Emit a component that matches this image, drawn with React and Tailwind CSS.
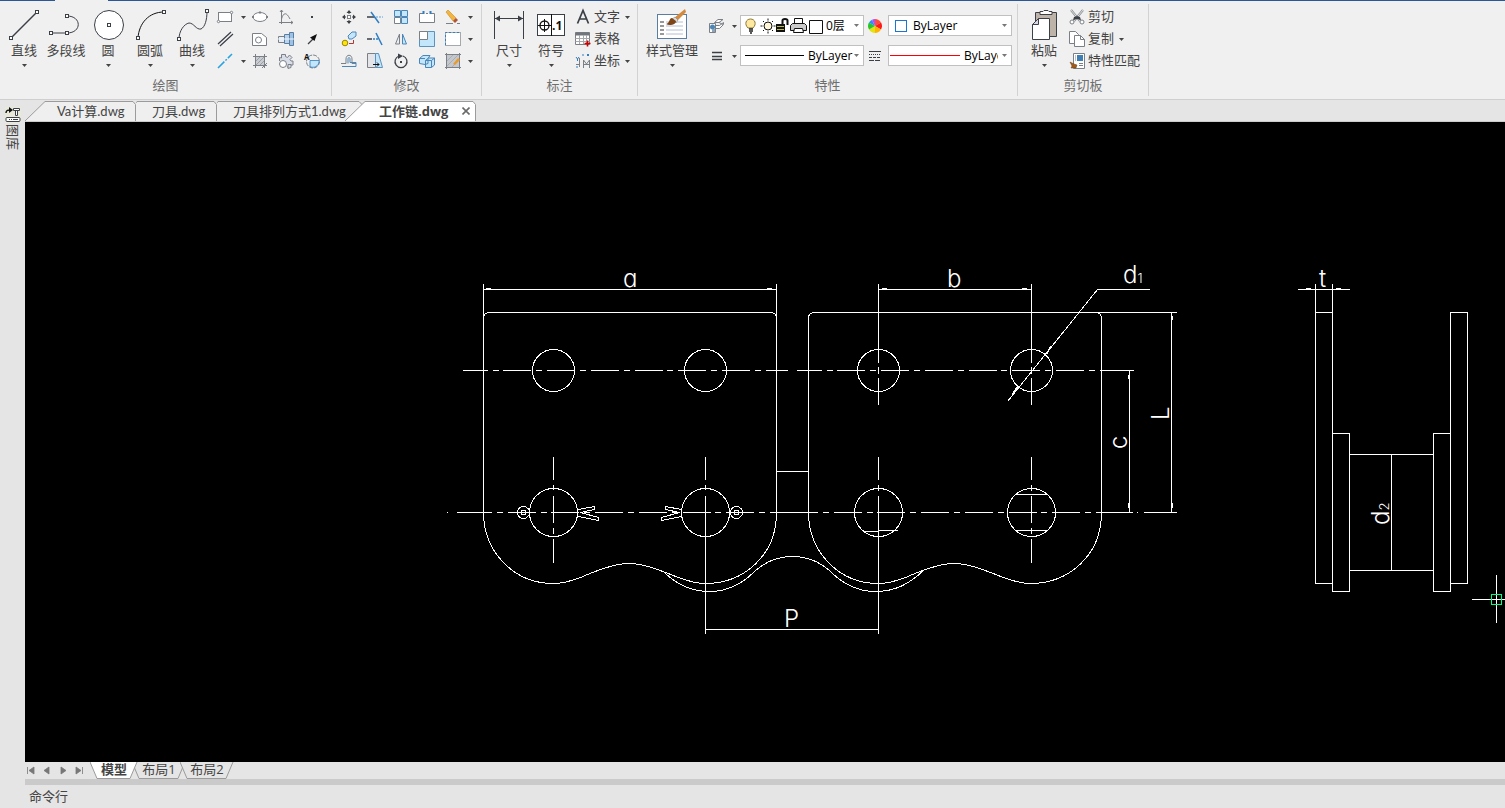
import { clsx } from 'clsx'

const ink = '#3b3f46'
const soft = '#7b8087'
const blue = '#2f7fc4'
const sky = '#c3e6fa'

function Caret({ className }) {
  return (
    <svg width="5" height="3" viewBox="0 0 5 3" className={clsx('shrink-0', className)}>
      <path d="M0 0h5L2.5 3z" fill="currentColor" />
    </svg>
  )
}

/* ---------- large icons, 34 x 34 ---------- */

const Dot = ({ x, y }) => (
  <rect x={x - 1.5} y={y - 1.5} width="3" height="3" fill="#fff" stroke={ink} />
)

const big = {
  line: (
    <>
      <path d="M4 30 30 4" stroke={ink} strokeWidth="1.5" />
      <Dot x={4} y={30} />
      <Dot x={30} y={4} />
    </>
  ),
  polyline: (
    <>
      <path d="M2 25h16c15 0 15-17 0-17" stroke={ink} fill="none" />
      <Dot x={2} y={25} />
      <Dot x={18} y={25} />
      <Dot x={18} y={8} />
    </>
  ),
  circle: (
    <>
      <circle cx="18" cy="17" r="14.500" fill="#fff" stroke={ink} />
      <Dot x={18} y={17} />
    </>
  ),
  arc: (
    <>
      <path d="M5 30C6 15 16 4 31 4" stroke="#111" fill="none" />
      <Dot x={5} y={30} />
      <Dot x={31} y={4} />
    </>
  ),
  curve: (
    <>
      <path d="M4 31c0-8 5-15 10-16 5 0 7 7 12 6 4-2 6-9 6-18" stroke={ink} fill="none" />
      <Dot x={4} y={31} />
      <Dot x={32} y={3} />
    </>
  ),
  dimension: (
    <>
      <path d="M2.500 3v28M31.500 3v28M3 10.500h28" stroke={ink} />
      <path d="M3 10.500l5-3v6zM31 10.500l-5-3v6z" fill={ink} />
    </>
  ),
  symbol: (
    <>
      <rect x="3.500" y="6.500" width="27" height="21" fill="#fff" stroke={ink} />
      <path d="M17.500 6v22M4 17.500h13M10.500 11v13" stroke="#111" />
      <circle cx="10.500" cy="17.500" r="4.500" fill="none" stroke="#111" strokeWidth="1.300" />
      <text x="18" y="22" className="text-[12px] font-bold" fill="#111">.1</text>
    </>
  ),
  style: (
    <>
      <rect x="2.500" y="6.500" width="29" height="24" fill="#fff" stroke="#5a7ea3" />
      <path d="M5 14h4M5 18h4M5 22h4M5 26h4" stroke="#333" />
      <path d="M11 14h17M11 18h17M11 22h17M11 26h17" stroke="#b5bed8" />
      <path d="m30 1-11 9 3 3 9-9z" fill="#d38a3c" />
      <path d="m20 9-3 2 4 4 2-3z" fill="#d9dde2" stroke="#777" strokeWidth=".5" />
      <path d="M17 10c-3 0-2 5-6 6 3 2 10 1 10-3z" fill="#7d4516" />
    </>
  ),
  paste: (
    <>
      <path d="M8.500 4.500h21v24h-21z" fill="#bdb3a8" stroke={ink} />
      <path d="M13 3.500h3l1-1h4l1 1h3v3H13z" fill="#fff" stroke={ink} />
      <path d="M11.500 10.500h11v21h-17v-15z" fill="#fff" stroke={ink} />
      <path d="M11.500 10.500v6h-6z" fill="#d6d8e4" stroke={ink} />
    </>
  ),
}

/* ---------- small icons, 16 x 16 ---------- */

const small = {
  rect: (
    <>
      <rect x=".5" y="3.500" width="13" height="9" fill="#fff" stroke={soft} />
      <circle cx="13.500" cy="3.500" r="1.200" fill="#fff" stroke={soft} />
      <circle cx=".5" cy="12.500" r="1.200" fill="#fff" stroke={soft} />
    </>
  ),
  ellipse: (
    <>
      <ellipse cx="8" cy="8" rx="7" ry="4.500" fill="#fff" stroke={soft} />
      <path d="M7 2.500h2v2H7zM0 7h2v2H0zM14 7h2v2h-2z" fill={soft} />
    </>
  ),
  graph: (
    <>
      <path d="M3.500 1v14M1 13.500h14M2 3l1.500-2L5 3M13 12l2 1.500-2 1.500" stroke={soft} fill="none" />
      <path d="M3.500 10c2-7 5-7 8.500 0" stroke={soft} fill="none" />
    </>
  ),
  point: <rect x="7" y="7" width="2" height="2" fill={ink} />,
  parallel: <path d="M0 13 13 1M2 15 15 3" stroke={ink} strokeWidth="1.200" />,
  contour: (
    <>
      <path d="M.5 2.500h9l5 4v8H.5z" fill="#fff" stroke={soft} />
      <circle cx="6.500" cy="9" r="3" fill="#fff" stroke={soft} />
    </>
  ),
  shaft: (
    <>
      <path d="M.5 5.500h6v6h-6z" fill="#e8eef5" stroke={soft} />
      <path d="M6.500 3.500h5v9h-5z" fill="#bcd3ea" stroke="#5a7ea3" />
      <path d="M11.500 1.500h4v13h-4z" fill="#9dc2e4" stroke="#5a7ea3" />
      <path d="M0 8h16" stroke="#eaf6ff" />
    </>
  ),
  arrow: (
    <>
      <path d="m4 13 5-5" stroke={ink} strokeWidth="1.300" />
      <path d="m13 3-2.500 7L6 6.500z" fill="#111" />
    </>
  ),
  axis: (
    <path d="M0 15 14 1" stroke="#2aa3e0" strokeWidth="1.500" strokeDasharray="9 1.500 2 1.500" />
  ),
  hatch: (
    <>
      <rect x="3" y="3" width="10" height="10" fill="#c9cdd1" />
      <path d="M3 9l6-6M3 13 13 3M7 13l6-6" stroke="#9ba0a6" />
      <path d="M1 3.500h14M1 12.500h14M3.500 1v14M12.500 1v14M10 15l5-5" stroke={soft} fill="none" />
    </>
  ),
  gear: (
    <>
      <path
        d="M1.500 8V4.500l2 .5V1.500h4v2l2 1 2-2.500 2.500 2.500-2 2 1 1.500h2v4h-2l-1 2h-3"
        fill="#d9dde8"
        stroke={soft}
      />
      <circle cx="5" cy="11" r="3.500" fill="#fff" stroke={soft} />
      <path d="M10 15.500v-4h3v3z" fill="#d9dde8" stroke={soft} />
    </>
  ),
  detail: (
    <>
      <circle cx="9" cy="8.500" r="6.500" fill="none" stroke={soft} strokeDasharray="4 1" />
      <path d="M6 7.500h9v1a6 6 0 0 1-9 5z" fill={sky} stroke={blue} strokeWidth=".8" />
      <text x="0" y="7" className="text-[8px] font-bold" fill="#111">A</text>
    </>
  ),
  move: (
    <>
      <path d="M8 2.500V5M8 11v2.500M2.500 8H5M11 8h2.500" stroke={ink} />
      <path d="m8 1 2.500 3h-5zM8 15l2.500-3h-5zM1 8l3-2.500v5zM15 8l-3-2.500v5z" fill={ink} />
      <rect x="6.500" y="6.500" width="3" height="3" fill="#fff" stroke={soft} />
    </>
  ),
  trim: (
    <>
      <path d="M0 8h8" stroke={ink} strokeWidth="1.500" />
      <path d="M9 8h7" stroke="#8cbbe2" strokeWidth="1.500" strokeDasharray="2 1" />
      <path d="m4 3 8 11" stroke={blue} strokeWidth="1.500" />
    </>
  ),
  array: (
    <>
      <path d="M1.500 1.500h6v6h-6zM8.500 1.500h6v6h-6zM8.500 8.500h6v6h-6z" fill={sky} stroke="#4a86b8" />
      <path d="M1.500 8.500h6v6h-6z" fill="#fff" stroke={soft} />
    </>
  ),
  breakAt: (
    <>
      <path d="M.5 4.500v9h15v-9" fill="#fff" stroke={soft} />
      <path d="M.5 4.500h4M7 4.500h2M11.500 4.500h4" stroke={soft} />
      <path d="M3.500 2h2v3h-2zM10.500 2h2v3h-2z" fill={blue} />
    </>
  ),
  erase: (
    <>
      <path d="m1 3 2-2 8 8-3 3z" fill="#f5b53c" stroke="#b87d1c" strokeWidth=".5" />
      <path d="m8 12 3-3 2 2-3 3z" fill="#b0543c" />
      <path d="M1 14.500h7M12 14.500h3" stroke={soft} />
    </>
  ),
  copyObj: (
    <>
      <path d="m7 5 4-4h4v4l-4 3H8z" fill={sky} stroke="#4a86b8" />
      <circle cx="4" cy="12" r="2.800" fill="#ffe500" stroke="#99860a" />
      <path d="M8 12.500h4.500V9" stroke="#b03838" fill="none" />
    </>
  ),
  extend: (
    <>
      <path d="M0 8h5" stroke={ink} strokeWidth="1.500" />
      <path d="M6 8h5" stroke={blue} strokeWidth="1.500" strokeDasharray="2 1" />
      <path d="m9 2 6 12" stroke={blue} strokeWidth="1.500" />
    </>
  ),
  mirror: (
    <>
      <path d="M6.500 3v10h-4z" fill="#eceef1" stroke={soft} />
      <path d="M9.500 3v10h4z" fill={sky} stroke="#4a86b8" />
    </>
  ),
  scale: (
    <>
      <path d="M.5 .5h15v15H.5z" fill={sky} stroke="#5b93bf" />
      <path d="M.5 .5h8v8h-8z" fill="#fff" stroke={soft} />
    </>
  ),
  select: (
    <>
      <rect x=".5" y="1.500" width="15" height="13" fill="#fff" stroke="#a5a9ae" />
      <path d="M.5 14V1.500H15" fill="none" stroke={blue} strokeDasharray="2 2" />
    </>
  ),
  offset: (
    <>
      <path d="M0 10.500h5V6c0-5 6-5 6 0v4.500h4" fill="none" stroke={soft} />
      <path d="M1 13.500h14V9.500H9V6c0-2-2-2-2 0v4.500" fill="none" stroke="#4a86b8" />
    </>
  ),
  stretch: (
    <>
      <path d="M.5 .5h8v14h-8z" fill="#e3e5e8" stroke={soft} />
      <path d="M8.500 .5h3l4 14h-7z" fill={sky} stroke="#5b93bf" />
      <path d="M6 11.500h6M10 9.500l2 2-2 2" fill="none" stroke="#111" />
    </>
  ),
  rotate: (
    <>
      <path d="M10 3A6 6 0 1 1 6 3" fill="none" stroke={ink} strokeWidth="1.300" />
      <path d="M5 .5 10 3 5 6z" fill={ink} />
      <rect x="7" y="8" width="2" height="2" fill={ink} />
    </>
  ),
  block: (
    <path
      d="M.5 5.500 4 2.500h7l-2 3v5l-3 1-5.500-1zM6.500 7.500l3-2.500h6v7l-3 2.500h-6zM6.500 7.500h6v7M12.500 7.500l3-2.500M.5 5.500H6"
      fill={sky}
      stroke="#4a86b8"
    />
  ),
  editHatch: (
    <>
      <rect x="2" y="2" width="12" height="12" fill="#c4c8cc" />
      <path d="M2 8l6-6M2 13 13 2M7 14l7-7" stroke="#a9aeb4" />
      <path d="M0 1.500h16M0 14.500h16M1.500 0v16M14.500 0v16" stroke={soft} />
      <path d="m8 11 5-6 2 2-5 5z" fill="#e89a2c" />
    </>
  ),
  text: (
    <path d="M2.500 14.500 8 1.500l5.500 13M4.500 10h7" fill="none" stroke={ink} strokeWidth="1.700" />
  ),
  table: (
    <>
      <path d="M.5 1.500h14v12H.5z" fill="#fff" stroke={soft} />
      <path d="M.5 1.500h14v3H.5z" fill="#70757c" />
      <path d="M.5 7.500h14M.5 10.500h14M4.500 4v9M8.500 4v9M11.500 4v9" stroke="#a5a9ae" />
      <path d="M12.500 9.500v6M9.500 12.500h6" stroke="#c00" strokeWidth="1.600" />
    </>
  ),
  coord: (
    <>
      <path d="M4.500 5v9M1 11.500h4M8.500 15V7l3 4 3-4v8M8 11.500h7" fill="none" stroke={soft} />
      <path d="m1 4 1.500 2L4 4M2.500 6v2M7 2h2M12 1l2 2M14 1l-2 2M1 14h2" fill="none" stroke={blue} />
    </>
  ),
  layers: (
    <>
      <path d="M5.500 4.500 9 1.500h5l-4 3zM5.500 7.500h5l4-3v2l-4 4h-5M10 4.500l4 2" fill="#fff" stroke={soft} />
      <path d="M.5 5.500h6v9h-6z" fill="#fff" stroke={soft} />
      <circle cx="3.500" cy="9" r="2.500" fill="#4a86b8" />
      <path d="M3 11h3v3H3z" fill="#8fa3b8" />
    </>
  ),
  lines: <path d="M3 4.500h10M3 8.500h10M3 11.500h10" stroke={ink} strokeWidth="1.300" />,
  lineType: (
    <>
      <path d="M2 3.500h12" stroke={ink} />
      <path d="M2 6.500h12" stroke={ink} strokeDasharray="1 1" />
      <path d="M2 9.500h12" stroke={ink} strokeDasharray="3 1" />
      <path d="M2 12.500h12" stroke={ink} strokeDasharray="5 1" />
    </>
  ),
  cut: (
    <>
      <path d="m2 1 9 11M14 1 5 12" stroke="#8b9096" strokeWidth="2.200" />
      <path d="m2 1 9 11M14 1 5 12" stroke="#fff" strokeWidth=".7" />
      <path d="m5 8 3-1 3 1 1 3-4-1-4 1z" fill={ink} />
      <circle cx="3" cy="13" r="2" fill="#fff" stroke={soft} />
      <circle cx="13" cy="13" r="2" fill="#fff" stroke={soft} />
    </>
  ),
  copy: (
    <>
      <path d="M.5 .5h6l3 3v9h-9z" fill="#fff" stroke={soft} />
      <path d="M5.500 4.500h6l4 4v7h-10z" fill="#fff" stroke={soft} />
      <path d="M11.500 4.500v4h4" fill="none" stroke={soft} />
    </>
  ),
  match: (
    <>
      <path d="M4.500 .5h11v15h-11z" fill="#fff" stroke={soft} />
      <path d="M8 2h6v6H8z" fill="#3f7db5" />
      <path d="M6 3h1M6 5h1M6 7h1M10 10.500h4M10 12.500h4" stroke={soft} />
      <path d="m1 9 4 2 3 1-1 3H2l1-2z" fill="#a05a1c" stroke="#6d3c10" strokeWidth=".5" />
    </>
  ),
}

function SmallIcon({ name }) {
  return (
    <svg width="16" height="16" viewBox="0 0 16 16" fill="none" className="shrink-0 overflow-visible">
      {small[name]}
    </svg>
  )
}

function BigButton({ icon, label, caret = true, wide }) {
  return (
    <button className={clsx('flex shrink-0 flex-col items-center pt-1', wide ? 'w-14' : 'w-[42px]')}>
      <svg width="34" height="34" viewBox="0 0 34 34" fill="none">
        {big[icon]}
      </svg>
      <span className="text-[13px] leading-4 whitespace-nowrap">{label}</span>
      {caret && <Caret className="mt-[6px]" />}
    </button>
  )
}

function IconButton({ icon, label }) {
  return (
    <button aria-label={label} className="flex h-[22px] w-[26px] items-center justify-center">
      <SmallIcon name={icon} />
    </button>
  )
}

function CaretButton({ label }) {
  return (
    <button aria-label={label} className="flex h-[22px] w-2 items-center justify-center">
      <Caret />
    </button>
  )
}

function TextButton({ icon, label, caret }) {
  return (
    <button className="flex h-[22px] items-center gap-[3px]">
      <SmallIcon name={icon} />
      <span className="pb-[2px] text-[13px] leading-4 whitespace-nowrap">{label}</span>
      {caret && <Caret className="ml-[2px]" />}
    </button>
  )
}

function Group({ label, children, className }) {
  return (
    <section aria-label={label} className="flex shrink-0 flex-col border-r border-[#d2d2d2]">
      <div className={clsx('flex h-[72px]', className)}>{children}</div>
      <h2 className="text-center text-[13px] leading-[18px] text-[#6e6e6e]">{label}</h2>
    </section>
  )
}

function Combo({ label, children, value, selectClass }) {
  return (
    <div className="relative flex h-[21px] w-[124px] items-center border border-[#c0c0c0] bg-white text-xs text-black">
      {children}
      <select
        aria-label={label}
        className={clsx('shrink-0 appearance-none overflow-hidden whitespace-nowrap outline-none', selectClass)}
      >
        <option>{value}</option>
      </select>
      <Caret className="pointer-events-none absolute right-1 text-[#777]" />
    </div>
  )
}

function ColorWheel() {
  return (
    <svg width="14" height="14" viewBox="-7 -7 14 14">
      <path d="M0 0V-7A7 7 0 0 1 6 -3.500z" fill="#ff4d3a" />
      <path d="M0 0 6-3.500A7 7 0 0 1 6 3.500z" fill="#ff1a1a" />
      <path d="M0 0 6 3.500A7 7 0 0 1 0 7z" fill="#ffb400" />
      <path d="M0 0V7A7 7 0 0 1-6 3.500z" fill="#e4e312" />
      <path d="M0 0-6 3.500A7 7 0 0 1-6-3.500z" fill="#28c628" />
      <path d="M0 0-6-3.500A7 7 0 0 1-3-6.300z" fill="#2c8cff" />
      <path d="M0 0-3-6.300A7 7 0 0 1 0-7z" fill="#b34dff" />
    </svg>
  )
}

function LayerIcons() {
  return (
    <svg width="79" height="17" viewBox="0 0 79 17" fill="none" className="ml-[3px] shrink-0">
      {/* bulb */}
      <path d="M4 11C0 7 2 2 6.500 2S13 7 9 11z" fill="#ffe9a0" stroke="#8a7a3a" />
      <path d="M5 12h4M5 14h4M6 16h2" stroke="#222" strokeWidth="1.500" />
      {/* sun */}
      <circle cx="24" cy="9" r="4" fill="#fff6d8" stroke="#111" />
      <path d="M24 1.500v2M24 14.500v2M16.500 9h2M29.500 9h2M19 4l1 1M28 13l1 1M29 4l-1 1M20 13l-1 1" stroke="#111" />
      {/* open padlock */}
      <path d="M32 7h9v8h-9z" fill="#111" />
      <path d="M33 9.500h7M33 12.500h7" stroke="#b9b93c" />
      <path d="M38.500 7V3.500c0-2 5-2 5 0V8" stroke="#111" strokeWidth="2" />
      {/* printer */}
      <path d="M50.500 7V1.500h8V7" fill="#fff" stroke="#111" />
      <path d="M48.500 6.500h12l2 2v5h-16v-5z" fill="#c9c9c9" stroke="#111" />
      <path d="M50.500 11.500h8l1 4h-10z" fill="#fff" stroke="#111" />
      {/* swatch */}
      <path d="M65.500 3.500h13v13h-13z" fill="#fff" stroke="#111" />
    </svg>
  )
}

function LineSample({ width, color, className }) {
  return (
    <svg width={width} height="3" shapeRendering="crispEdges" className={clsx('shrink-0', className)}>
      <rect y="1" width={width} height="1" fill={color} />
    </svg>
  )
}

function Ribbon() {
  return (
    <header className="h-[100px] shrink-0 border-b border-[#cfcfcf] bg-[#f0f0f0]">
      <div className="flex h-1 items-start">
        <div className="h-px w-[55px] bg-[#2b579a]" />
        <div className="h-px w-[53px]" />
        <div className="h-px flex-1 bg-[#2b579a]" />
      </div>
      <div className="flex h-[92px]">
        <Group label="绘图" className="w-[331px] pl-[3px]">
          <BigButton icon="line" label="直线" />
          <BigButton icon="polyline" label="多段线" caret={false} />
          <BigButton icon="circle" label="圆" />
          <BigButton icon="arc" label="圆弧" />
          <BigButton icon="curve" label="曲线" />
          <div className="grid auto-rows-[22px] grid-cols-[26px_8px_26px_26px_26px] pt-[2px]">
            <IconButton icon="rect" label="矩形" />
            <CaretButton label="矩形选项" />
            <IconButton icon="ellipse" label="椭圆" />
            <IconButton icon="graph" label="公式曲线" />
            <IconButton icon="point" label="点" />
            <IconButton icon="parallel" label="平行线" />
            <span />
            <IconButton icon="contour" label="轮廓" />
            <IconButton icon="shaft" label="轴" />
            <IconButton icon="arrow" label="箭头" />
            <IconButton icon="axis" label="中心线" />
            <CaretButton label="中心线选项" />
            <IconButton icon="hatch" label="剖面线" />
            <IconButton icon="gear" label="齿轮" />
            <IconButton icon="detail" label="局部放大" />
          </div>
        </Group>
        <Group label="修改" className="w-[149px] pl-1">
          <div className="grid auto-rows-[22px] grid-cols-[repeat(5,26px)_8px] pt-[2px]">
            <IconButton icon="move" label="平移" />
            <IconButton icon="trim" label="裁剪" />
            <IconButton icon="array" label="阵列" />
            <IconButton icon="breakAt" label="打断" />
            <IconButton icon="erase" label="删除" />
            <CaretButton label="删除选项" />
            <IconButton icon="copyObj" label="平移复制" />
            <IconButton icon="extend" label="延伸" />
            <IconButton icon="mirror" label="镜像" />
            <IconButton icon="scale" label="缩放" />
            <IconButton icon="select" label="选择" />
            <CaretButton label="选择选项" />
            <IconButton icon="offset" label="等距线" />
            <IconButton icon="stretch" label="拉伸" />
            <IconButton icon="rotate" label="旋转" />
            <IconButton icon="block" label="块" />
            <IconButton icon="editHatch" label="编辑剖面线" />
            <CaretButton label="编辑选项" />
          </div>
        </Group>
        <Group label="标注" className="w-[155px] pl-[6px]">
          <BigButton icon="dimension" label="尺寸" />
          <BigButton icon="symbol" label="符号" />
          <div className="flex flex-col items-start pt-[2px] pl-[3px]">
            <TextButton icon="text" label="文字" caret />
            <TextButton icon="table" label="表格" />
            <TextButton icon="coord" label="坐标" caret />
          </div>
        </Group>
        <Group label="特性" className="w-[379px] pl-[6px]">
          <BigButton icon="style" label="样式管理" wide />
          <div className="grid auto-rows-[21px] grid-cols-[26px_8px_124px_24px_124px] gap-y-[9px] pt-[11px] pl-1">
            <IconButton icon="layers" label="图层" />
            <CaretButton label="图层选项" />
            <div className="pl-[2px]">
              <Combo label="图层" value="0层" selectClass="ml-[3px] w-6">
                <LayerIcons />
              </Combo>
            </div>
            <div className="flex items-center justify-center pl-[2px]">
              <ColorWheel />
            </div>
            <div className="pl-[2px]">
              <Combo label="颜色" value="ByLayer" selectClass="ml-[6px] w-20">
                <span className="ml-[6px] size-3 border border-[#1a76d2] bg-white" />
              </Combo>
            </div>
            <IconButton icon="lines" label="线宽" />
            <CaretButton label="线宽选项" />
            <div className="pl-[2px]">
              <Combo label="线宽" value="ByLayer" selectClass="ml-1 w-12">
                <LineSample width={59} color="#000" className="ml-1" />
              </Combo>
            </div>
            <div className="flex items-center justify-center pl-[2px]">
              <SmallIcon name="lineType" />
            </div>
            <div className="pl-[2px]">
              <Combo label="线型" value="ByLayer" selectClass="ml-1 w-[34px]">
                <LineSample width={70} color="#f00" className="ml-px" />
              </Combo>
            </div>
          </div>
        </Group>
        <Group label="剪切板" className="w-[130px] pl-[5px]">
          <BigButton icon="paste" label="粘贴" />
          <div className="flex flex-col items-start pt-[2px] pl-1">
            <TextButton icon="cut" label="剪切" />
            <TextButton icon="copy" label="复制" caret />
            <TextButton icon="match" label="特性匹配" />
          </div>
        </Group>
      </div>
    </header>
  )
}

/* ---------- document tabs ---------- */

function FileTab({ label, width, shape, active, className, children }) {
  return (
    <div className={clsx('relative flex h-5 shrink-0 items-center', className)}>
      <svg
        width={width}
        height="20"
        viewBox={`0 0 ${width} 20`}
        className="absolute inset-0"
        fill={active ? '#fff' : '#efefef'}
        stroke="#9b9b9b"
      >
        <path d={shape} />
      </svg>
      <button
        role="tab"
        aria-selected={!!active}
        className={clsx(
          'relative text-[13px] leading-[18px] whitespace-nowrap',
          active ? 'font-bold' : "font-['Lato','Noto_Sans_CJK_SC',sans-serif]",
        )}
      >
        {label}
      </button>
      {children}
    </div>
  )
}

function FileTabs() {
  return (
    <div role="tablist" className="flex h-[22px] shrink-0 items-end border-b border-[#cccccc] bg-[#e5e5e5]">
      <FileTab
        label="Va计算.dwg"
        width={111}
        shape="M0 20 20 .5H108l2.500 3V20"
        className="w-[111px] pl-8"
      />
      <FileTab label="刀具.dwg" width={81} shape="M-1 20V3l2-2.500H78l2.500 3V20" className="w-[81px] pl-4" />
      <FileTab
        label="刀具排列方式1.dwg"
        width={146}
        shape="M-1 20V3l2-2.500H142l3 3V20"
        className="w-[128px] pl-4"
      />
      <FileTab
        label="工作链.dwg"
        width={131}
        shape="M0 20 20 .5H128l2.500 3V20"
        active
        className="w-[131px] pl-[34px]"
      >
        <button aria-label="关闭" className="absolute right-[6px] flex size-2 items-center justify-center">
          <svg width="8" height="8" viewBox="0 0 8 8" stroke="#6a6a6a" strokeWidth="1.600">
            <path d="m.5.5 7 7M7.500.5l-7 7" />
          </svg>
        </button>
      </FileTab>
    </div>
  )
}

/* ---------- drawing ---------- */

function Plate() {
  return (
    <path d="M483 512V318Q483 312 489 312H770Q776 312 776 318V512C776 556 742 583 705 583C694 583 686 580 678 577C662 571 645 563 628 563C614 563 596 570 580 577C572 580 564 583 553 583C512 583 483 550 483 512" />
  )
}

function Canvas() {
  return (
    <svg
      viewBox="25 122 1480 640"
      className="block min-h-0 w-full flex-1 bg-black font-['Inter',sans-serif]"
      fill="none"
      stroke="#fff"
      shapeRendering="crispEdges"
    >
      <g transform="translate(.5 .5)">
        {/* link plates */}
        <Plate />
        <g transform="translate(325 0)">
          <Plate />
        </g>
        <path d="M776 471H808" />
        <path d="M663 571C676 584 690 591 709 591C727 591 742 583 754 571C766 560 780 556 792 556C804 556 818 560 830 571C842 583 857 591 875 591C894 591 908 584 923 570" />

        {/* holes */}
        {[553, 705, 878, 1031].map((x) => (
          <g key={x}>
            <circle cx={x} cy="370" r="21" />
            <circle cx={x} cy="512" r="24" />
          </g>
        ))}
        <path d="M862 531H878M878 530H897M1015 494H1047M1015 530H1047" />

        {/* cotter pins */}
        <circle cx="523" cy="512" r="6" />
        <circle cx="523" cy="512" r="2.500" />
        <circle cx="736" cy="512" r="6" />
        <circle cx="736" cy="512" r="2.500" />
        <path d="M578 509 594 506V509L580 512 598 517V520L578 516" />
        <path d="M681 509 665 506V509L679 512 661 517V520L681 516" />
      </g>

      {/* centre lines */}
      <g transform="translate(0 .5)">
        <path d="M463 370H788" strokeDasharray="28 4.800 6 4.900" strokeDashoffset="3.300" />
        <path d="M797 370H1101" strokeDasharray="28 4.800 6 4.900" strokeDashoffset="3.300" />
        <path d="M1101 370H1134" />
        <path d="M447 512h1M457 512h12M1101 512H1133M1137 512h1M1144 512H1177" />
        <path d="M464 512H790" strokeDasharray="28 4.800 6 4.900" />
        <path d="M776 512H790" />
        <path d="M790 512H1101" strokeDasharray="28 4.800 6 4.900" />
      </g>
      <g transform="translate(.5 0)">
        <path d="M553 457V480M553 485V490M553 496V523M553 528V534M553 539V563" />
        <path d="M705 457V480M705 485V490M705 496V634" />
        <path d="M878 284V363M878 367V374M878 378V405M878 457V480M878 485V491M878 496V634" />
        <path d="M1031 284V363M1031 367V374M1031 378V405" />
        <path d="M1031 457V480M1031 485V491M1031 496V523M1031 528V534M1031 539V563" />
        <path d="M483 318V284M776 318V284M1171 312V512M1129 370V512" />
        <path d="M1172 316v4M1172 503v5M1128 375v4M1128 503v5" />
        <path d="M1315 284V312M1332 284V312M1496 575V623" />
      </g>

      {/* dimensions */}
      <g transform="translate(0 .5)">
        <path d="M483 289H776M486 288h5M767 288h5" />
        <path d="M878 289H1031M882 288h5M1022 288h5" />
        <path d="M705 629H878M1095 312H1177M1097 289H1150" />
        <path d="M1298 289H1350M1306 288h5M1336 288h5M1472 599H1505" />
      </g>

      <g transform="translate(.5 .5)">
        {/* leader */}
        <path d="M1097 289 1007 401" />
        <path d="M1045 354 1051 346M1046 354 1050 346M1017 387 1011 394M1016 387 1012 393" />

        {/* side view */}
        <path d="M1315 312h17v271h-17zM1332 433h17v158h-17zM1433 433h17v158h-17zM1450 312h17v271h-17z" />
        <path d="M1349 454H1433M1349 570H1433M1391 454V570M1390 561h1" />

        {/* cursor pick box */}
        <path d="M1491 594h10v10h-10z" stroke="#00ff80" />
      </g>

      <g fill="#fff" stroke="none" className="text-2xl font-light [font-feature-settings:'cv11']">
        <text x="623" y="287">a</text>
        <text x="947" y="287">b</text>
        <text x="1123" y="283">
          d<tspan className="text-[13px]">1</tspan>
        </text>
        <text x="1319" y="287">t</text>
        <text x="784" y="627">P</text>
        <text transform="translate(1127 449) rotate(-90)">c</text>
        <text transform="translate(1169 420) rotate(-90)">L</text>
        <text transform="translate(1389 525) rotate(-90)">
          d<tspan className="text-[13px]">2</tspan>
        </text>
      </g>
    </svg>
  )
}

/* ---------- layout tabs ---------- */

const pager = [
  ['首页', 'M1.500 1v7M8 1v7L3 4.500z'],
  ['上一页', 'M7 1v7L2 4.500z'],
  ['下一页', 'M3 1v7l5-3.500z'],
  ['末页', 'M8.500 1v7M2 1v7l5-3.500z'],
]

function LayoutTab({ label, width, active, className }) {
  return (
    <button
      role="tab"
      aria-selected={!!active}
      className={clsx('relative flex h-[17px] items-start justify-center text-[13px] leading-[14px]', className)}
    >
      <svg
        width={width}
        height="17"
        viewBox={`0 0 ${width} 17`}
        className="absolute inset-0"
        fill={active ? '#fff' : '#e5e5e5'}
        stroke="#9b9b9b"
      >
        <path d={`M0 0 7 16.500H${width - 8}L${width - 1} 0`} />
      </svg>
      <span className={clsx('relative', active && 'font-bold')}>{label}</span>
    </button>
  )
}

function LayoutTabs() {
  return (
    <div className="flex h-[17px] shrink-0 items-center bg-[#e5e5e5] pl-px">
      {pager.map(([label, d]) => (
        <button key={label} aria-label={label} className="flex h-[17px] w-4 items-center">
          <svg width="9" height="9" viewBox="0 0 9 9" fill="#777">
            <path d={d} stroke="#777" strokeWidth=".8" />
          </svg>
        </button>
      ))}
      <div role="tablist" className="flex">
        <LayoutTab label="模型" width={48} active className="z-10 w-12" />
        <LayoutTab label="布局1" width={54} className="-ml-[6px] w-[54px]" />
        <LayoutTab label="布局2" width={54} className="-ml-[6px] w-[54px]" />
      </div>
    </div>
  )
}

export default function App() {
  return (
    <div className="flex h-screen flex-col overflow-hidden bg-[#e5e5e5] font-['Open_Sans','Noto_Sans_CJK_SC',sans-serif] text-[#444]">
      <Ribbon />
      <div className="flex min-h-0 flex-1">
        <aside className="w-[25px] shrink-0 pt-[7px]">
          <button className="flex w-full flex-col items-center">
            <svg width="16" height="16" viewBox="0 0 16 16" fill="none" stroke={ink}>
              <path d="M0 0h16v16H0z" fill="#e9e9da" stroke="none" />
              <path d="M1 6c0-3 2-3 5-3" stroke="#111" strokeWidth="1.400" />
              <path d="m4 0 4 3-4 3z" fill="#111" stroke="none" />
              <path d="M8.500 1.500h6v2h-6zM10.500 3.500v5h2v-5" fill="#fff" />
              <rect x="1" y="10.500" width="14" height="4" rx="1" fill="#fff" />
              <path d="M4 12.500h1M6 12.500h1M8 12.500h5" />
            </svg>
            <span className="mt-px text-[13px] leading-4 [text-orientation:sideways] [writing-mode:vertical-rl]">
              图库
            </span>
          </button>
        </aside>
        <main className="flex min-w-0 flex-1 flex-col">
          <FileTabs />
          <Canvas />
          <LayoutTabs />
          <div className="h-[6px] shrink-0 bg-[#cacaca]" />
          <footer className="flex h-[23px] shrink-0 items-center pb-[2px] pl-1 text-[13px] leading-[18px]">
            命令行
          </footer>
        </main>
      </div>
    </div>
  )
}
